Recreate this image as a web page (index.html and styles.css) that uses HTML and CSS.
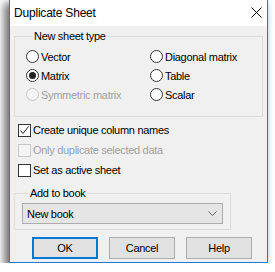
FILE: index.html
```html
<!DOCTYPE html>
<html lang="en">
<head>
    <meta charset="UTF-8">
    <title>Duplicate Sheet</title>
    <link rel="stylesheet" href="styles.css">
</head>
<body>
    <div class="window">
        <div class="titlebar">
            <span class="title">Duplicate Sheet</span>
            <svg class="close" width="11" height="11" viewBox="0 0 11 11">
                <path d="M0.5 0.5 L10.5 10.5 M10.5 0.5 L0.5 10.5" stroke="#000" stroke-width="1" fill="none"/>
            </svg>
        </div>
        <div class="content">
            <fieldset class="group type-group">
                <legend>New sheet type</legend>
                <div class="radio-grid">
                    <div class="option"><span class="radio"></span>Vector</div>
                    <div class="option"><span class="radio"></span>Diagonal matrix</div>
                    <div class="option"><span class="radio checked"></span>Matrix</div>
                    <div class="option"><span class="radio"></span>Table</div>
                    <div class="option disabled"><span class="radio"></span>Symmetric matrix</div>
                    <div class="option"><span class="radio"></span>Scalar</div>
                </div>
            </fieldset>
            <div class="checks">
                <div class="option">
                    <span class="checkbox">
                        <svg width="11" height="11" viewBox="0 0 11 11">
                            <path d="M1.5 5.5 L4 8.5 L9.5 1.5" stroke="#222" stroke-width="1" fill="none"/>
                        </svg>
                    </span>Create unique column names
                </div>
                <div class="option disabled"><span class="checkbox"></span>Only duplicate selected data</div>
                <div class="option"><span class="checkbox"></span>Set as active sheet</div>
            </div>
            <fieldset class="group book-group">
                <legend>Add to book</legend>
                <div class="select">
                    <span>New book</span>
                    <svg width="9" height="5" viewBox="0 0 9 5">
                        <path d="M0.5 0.5 L4.5 4.5 L8.5 0.5" stroke="#606060" stroke-width="1" fill="none"/>
                    </svg>
                </div>
            </fieldset>
            <div class="buttons">
                <button class="default">OK</button>
                <button>Cancel</button>
                <button>Help</button>
            </div>
        </div>
    </div>
</body>
</html>
```

FILE: styles.css
```css
body {
    margin: 0;
    padding: 0;
    background: #fff;
    font-family: 'Liberation Sans', Arial, sans-serif;
    font-size: 11px;
    letter-spacing: -0.3px;
    color: #000;
}
.window {
    margin-left: 9px;
    width: 259px;
    height: 263px;
    box-sizing: border-box;
    border: 1px solid #1f7ad6;
    border-top: none;
    background: #f0f0f0;
    box-shadow: -4px 4px 8px 1px rgba(0, 0, 0, 0.55);
    display: flex;
    flex-direction: column;
}
.titlebar {
    height: 26px;
    background: #fff;
    display: flex;
    align-items: center;
    justify-content: space-between;
    padding: 0 4px 1px 4px;
    box-sizing: border-box;
}
.title {
    font-size: 12px;
    letter-spacing: -0.2px;
}
.close {
    margin-right: 1px;
}
.content {
    padding: 4px 4px 0 4px;
}
.group {
    margin: 0;
    padding: 0;
    border: 1px solid #dcdcdc;
}
.group legend {
    margin-left: 6px;
    padding: 0 2px;
    line-height: 13px;
}
.type-group {
    padding: 4px 0 12px 11px;
}
.radio-grid {
    display: grid;
    grid-template-columns: 124px 1fr;
}
.option {
    height: 19px;
    display: flex;
    align-items: center;
}
.radio {
    width: 13px;
    height: 13px;
    box-sizing: border-box;
    border: 1px solid #333;
    border-radius: 50%;
    background: #fff;
    margin-right: 2px;
    display: flex;
    align-items: center;
    justify-content: center;
}
.radio.checked::after {
    content: '';
    width: 7px;
    height: 7px;
    border-radius: 50%;
    background: #222;
}
.disabled {
    color: #a0a0a0;
}
.disabled .radio, .disabled .checkbox {
    border-color: #c6c6c6;
    background: #f4f4f4;
}
.checks {
    padding: 3px 0 0 4px;
}
.checks .option {
    height: 20px;
}
.checkbox {
    width: 13px;
    height: 13px;
    box-sizing: border-box;
    border: 1px solid #333;
    background: #fff;
    margin-right: 2px;
    display: flex;
}
.book-group {
    width: 217px;
    box-sizing: border-box;
    margin-top: 7px;
    padding: 3px 7px 5px 7px;
}
.select {
    height: 21px;
    box-sizing: border-box;
    border: 1px solid #adadad;
    background: #e5e5e5;
    display: flex;
    align-items: center;
    justify-content: space-between;
    padding: 0 5px 0 4px;
}
.buttons {
    display: flex;
    justify-content: flex-end;
    gap: 11px;
    padding: 7px 11px 0 0;
}
button {
    width: 66px;
    height: 22px;
    font-family: inherit;
    font-size: 11px;
    letter-spacing: -0.3px;
    color: #000;
    background: #e1e1e1;
    border: 1px solid #adadad;
    padding: 0;
}
button.default {
    border: 2px solid #0078d7;
}
```
